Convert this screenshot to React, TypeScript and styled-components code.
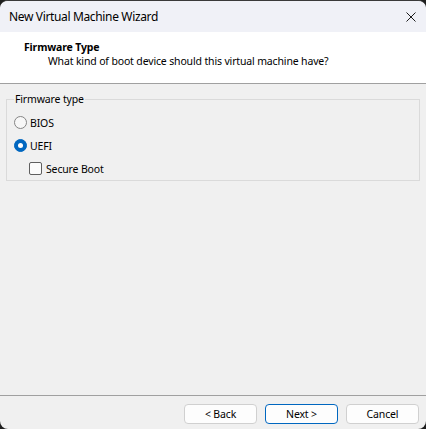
import styled, { createGlobalStyle } from "styled-components";

const GlobalStyle = createGlobalStyle`
  html,
  body {
    margin: 0;
    padding: 0;
    background: #1f1f1f;
    overflow: hidden;
  }

  body {
    font-family: "Noto Sans", "Open Sans", sans-serif;
    font-size: 10.5px;
    letter-spacing: -0.15px;
    color: #000;
  }
`;

const Window = styled.div`
  display: flex;
  flex-direction: column;
  width: 426px;
  height: 428px;
  border-top: 1px solid #3a3a3a;
  border-radius: 8px;
  overflow: hidden;
  background: #f0f0f0;
`;

const TitleBar = styled.div`
  display: flex;
  align-items: center;
  justify-content: space-between;
  height: 31px;
  padding: 0 10px 0 9px;
  background: #f0f1f7;
`;

const Title = styled.span`
  font-size: 12px;
  letter-spacing: -0.35px;
  line-height: 16px;
`;

const CloseButton = styled.button`
  display: flex;
  align-items: center;
  justify-content: center;
  width: 10px;
  height: 10px;
  padding: 0;
  border: none;
  background: none;
`;

const Header = styled.div`
  height: 43px;
  padding: 8px 0 0 24px;
  background: #fff;
  border-bottom: 1px solid #a0a0a0;
`;

const HeaderTitle = styled.div`
  font-weight: 700;
  line-height: 14px;
`;

const HeaderSub = styled.div`
  padding-left: 24px;
  line-height: 14px;
`;

const Body = styled.div`
  flex: 1;
  padding: 8px 6px 0;
`;

const GroupBox = styled.fieldset`
  margin: 0;
  padding: 5px 7px 0;
  min-width: 0;
  border: 1px solid #dadada;
`;

const Legend = styled.legend`
  padding: 0 1px;
  line-height: 14px;
`;

const OptionRow = styled.label<{ $indent?: number }>`
  display: flex;
  align-items: center;
  gap: 3px;
  height: 23px;
  padding-left: ${(p) => p.$indent ?? 0}px;
`;

const Radio = styled.span<{ $checked?: boolean }>`
  display: flex;
  align-items: center;
  justify-content: center;
  box-sizing: border-box;
  width: 13px;
  height: 13px;
  border-radius: 50%;
  border: 1px solid ${(p) => (p.$checked ? "#0067c0" : "#858585")};
  background: ${(p) => (p.$checked ? "#0067c0" : "#f7f7f7")};

  &::after {
    content: "";
    display: ${(p) => (p.$checked ? "block" : "none")};
    width: 5px;
    height: 5px;
    border-radius: 50%;
    background: #fff;
  }
`;

const CheckBox = styled.span`
  box-sizing: border-box;
  width: 13px;
  height: 13px;
  margin-right: 1px;
  border: 1px solid #5f5f5f;
  border-radius: 2px;
  background: #fbfbfb;
`;

const Footer = styled.div`
  display: flex;
  justify-content: flex-end;
  gap: 8px;
  padding: 8px 7px 5px;
  border-top: 1px solid #a0a0a0;
`;

const Button = styled.button<{ $primary?: boolean }>`
  box-sizing: border-box;
  width: 73px;
  height: 20px;
  padding: 0;
  font-family: inherit;
  font-size: inherit;
  letter-spacing: inherit;
  line-height: 16px;
  color: #000;
  background: #fdfdfd;
  border: 1px solid ${(p) => (p.$primary ? "#0067c0" : "#d0d0d0")};
  border-radius: 4px;
`;

const App = () => {
  return (
    <>
      <GlobalStyle />
      <Window>
        <TitleBar>
          <Title>New Virtual Machine Wizard</Title>
          <CloseButton aria-label="Close">
            <svg width="10" height="10" viewBox="0 0 10 10">
              <path
                d="M0.5 0.5 L9.5 9.5 M9.5 0.5 L0.5 9.5"
                stroke="#1b1b1b"
                strokeWidth="1"
              />
            </svg>
          </CloseButton>
        </TitleBar>

        <Header>
          <HeaderTitle>Firmware Type</HeaderTitle>
          <HeaderSub>What kind of boot device should this virtual machine have?</HeaderSub>
        </Header>

        <Body>
          <GroupBox>
            <Legend>Firmware type</Legend>
            <OptionRow>
              <Radio />
              BIOS
            </OptionRow>
            <OptionRow>
              <Radio $checked />
              UEFI
            </OptionRow>
            <OptionRow $indent={15}>
              <CheckBox />
              Secure Boot
            </OptionRow>
          </GroupBox>
        </Body>

        <Footer>
          <Button>&lt; Back</Button>
          <Button $primary>Next &gt;</Button>
          <Button>Cancel</Button>
        </Footer>
      </Window>
    </>
  );
};

export default App;
